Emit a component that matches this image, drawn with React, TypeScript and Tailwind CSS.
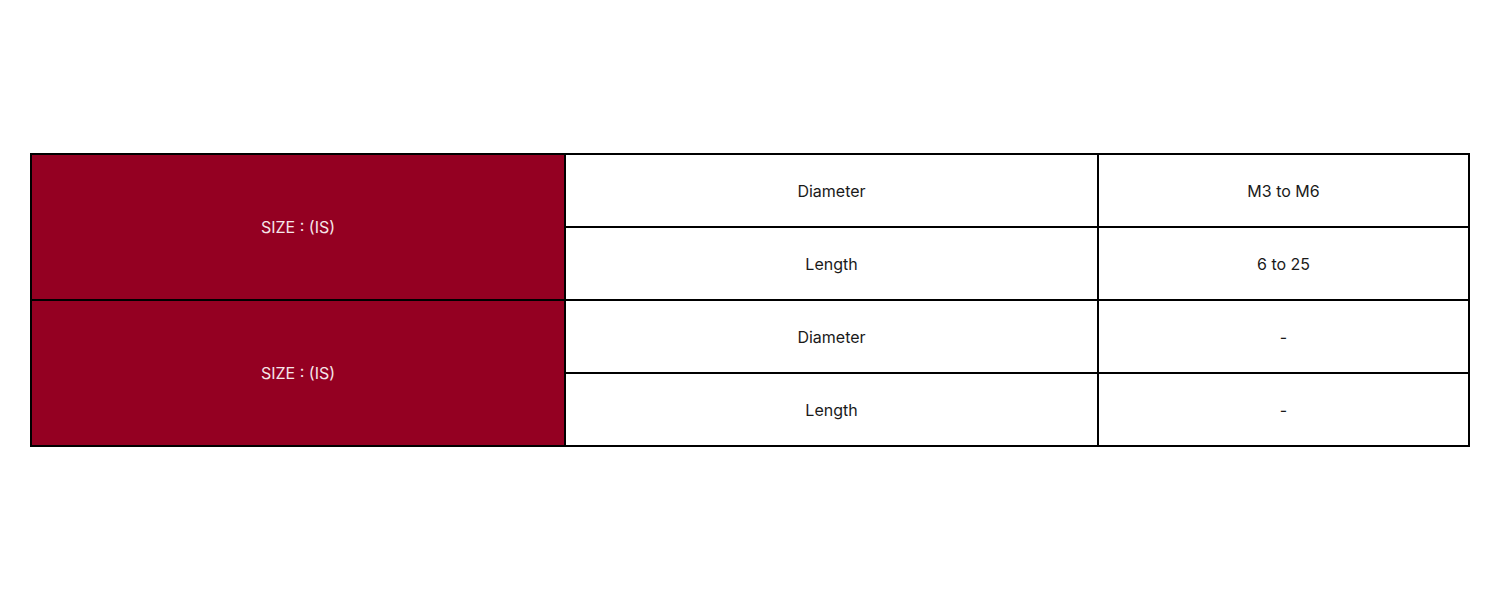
export default function App() {
  const groups = [
    { label: "SIZE : (IS)", rows: [["Diameter", "M3 to M6"], ["Length", "6 to 25"]] },
    { label: "SIZE : (IS)", rows: [["Diameter", "-"], ["Length", "-"]] },
  ]

  return (
    <div className="w-[1500px] h-[600px] bg-white pt-[153px] pl-[30px]" style={{ fontFamily: "Inter, 'Open Sans', sans-serif" }}>
      <table className="border-collapse w-[1438px] table-fixed text-[16px]">
        <colgroup>
          <col className="w-[534px]" />
          <col className="w-[533px]" />
          <col className="w-[371px]" />
        </colgroup>
        <tbody>
          {groups.map((g, gi) =>
            g.rows.map((r, ri) => (
              <tr key={`${gi}-${ri}`} className="h-[73px]">
                {ri === 0 && (
                  <td rowSpan={2} className="border-2 border-black bg-[#940022] text-[#f6e6ea] text-center align-middle">
                    {g.label}
                  </td>
                )}
                <td className="border-2 border-black text-center align-middle text-[#1a1a1a]">{r[0]}</td>
                <td className="border-2 border-black text-center align-middle text-[#1a1a1a]">{r[1]}</td>
              </tr>
            ))
          )}
        </tbody>
      </table>
    </div>
  )
}
